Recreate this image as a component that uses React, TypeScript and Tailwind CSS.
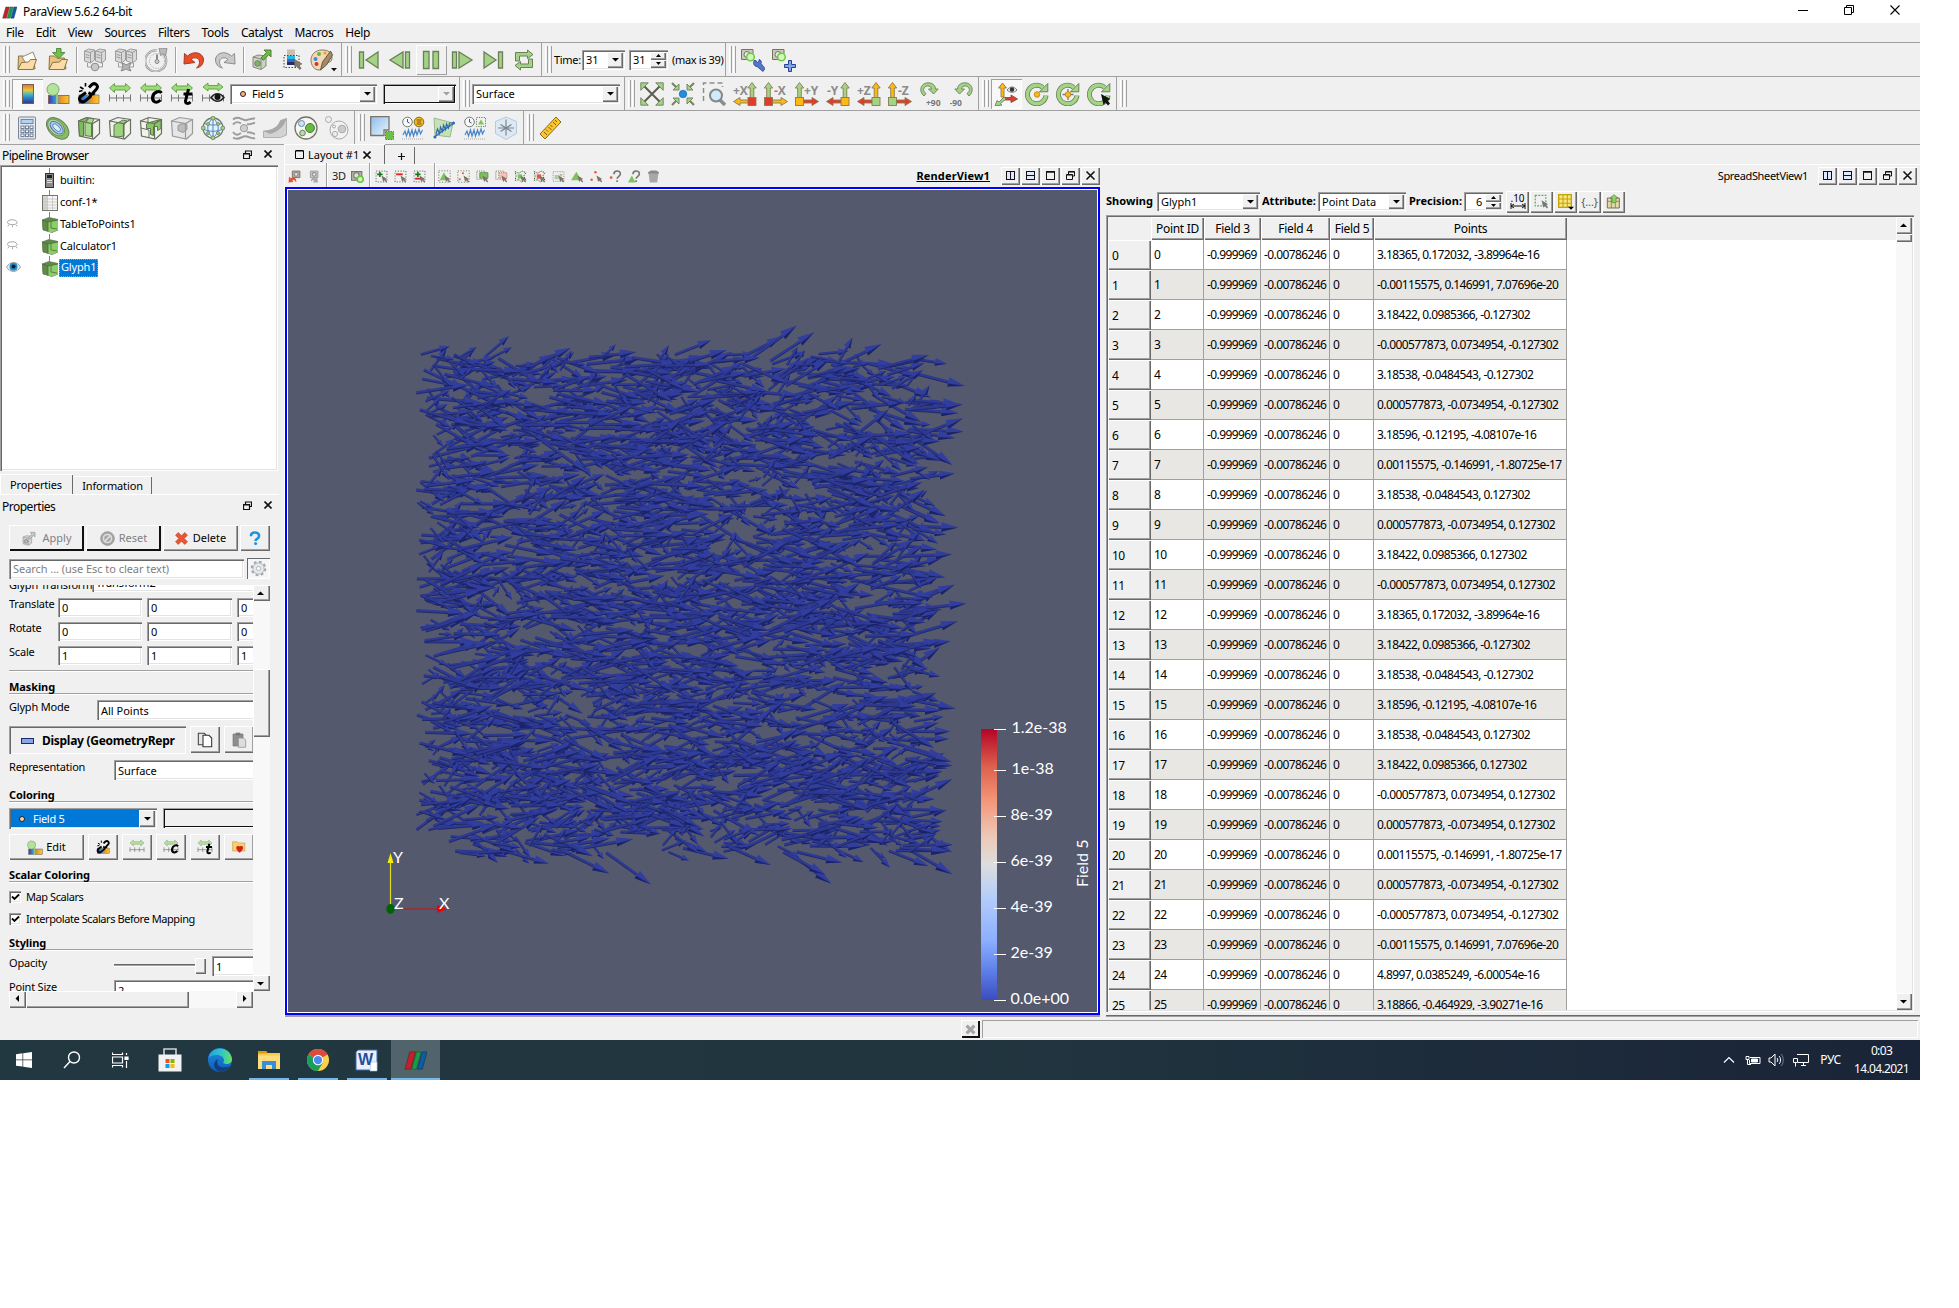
import React from "react";

const SUNK = "bg-white shadow-[inset_1px_1px_0_#a0a0a0,inset_2px_2px_0_#696969,inset_-1px_-1px_0_#fff,inset_-2px_-2px_0_#e3e3e3]";
const SUNK_OFF = "bg-[#f0f0f0] shadow-[inset_1px_1px_0_#a0a0a0,inset_2px_2px_0_#101010,inset_-1px_-1px_0_#fff,inset_-2px_-2px_0_#101010]";
const RAISED = "bg-[#f0f0f0] shadow-[inset_1px_1px_0_#fff,inset_-1px_-1px_0_#696969,inset_-2px_-2px_0_#a0a0a0]";
const RAISED_OFF = "bg-[#f0f0f0] shadow-[inset_1px_1px_0_#fff,inset_-2px_-2px_0_#101010]";
const TRACK = "bg-[#f8f8f8]";

type Kids = { children?: React.ReactNode };

/* ---------- icons ---------- */
const G = "#a3d486";
const GS = "#6c7f58";
const OL = "#75755f";

function I({ children, s = 24 }: Kids & { s?: number }) {
  return (
    <svg width={s} height={s} viewBox="0 0 24 24" fill="none" className="shrink-0">
      {children}
    </svg>
  );
}

const Logo = ({ s = 16 }: { s?: number }) => (
  <I s={s}>
    <path d="M6 3h6L7 21H1z" fill="#c4202b" stroke="#5a2020" strokeWidth=".6" />
    <path d="M13 3h5l-5 18H8z" fill="#1c9a4b" stroke="#204a2a" strokeWidth=".6" />
    <path d="M19 3h5l-5 18h-5z" fill="#0c5ca8" stroke="#10304a" strokeWidth=".6" />
  </I>
);

const Folder = ({ arrow }: { arrow?: boolean }) => (
  <I>
    <path d="M3 21L3.500 8h5l2 2h8l1.500 11z" fill="#eec27a" stroke="#8a7448" />
    {!arrow && <path d="M7 9l11-5 3 8-9 5z" fill="#fdfdf6" stroke="#8d8d80" />}
    <path d="M3 21.500l3.500-7 7-.5 2-2.500h6L18 21.500z" fill="#fbdca6" stroke="#8a7448" />
    {arrow && <path d="M10.500.500h4.500v4h4l-6.200 6L6.500 4.500h4z" fill="#6fc24b" stroke="#457a30" strokeWidth=".8" />}
  </I>
);

const Server = ({ kind }: { kind: number }) => (
  <I>
    <g fill="#d9d9d9" stroke="#949494" strokeWidth=".9">
      <path d="M1.500 3l4-2 6 1v10l-4 3-6-2z" />
      <path d="M1.500 3l6 1.500 4-2.500M7.500 4.500V15M2.500 6.500l4 1M2.500 9l4 1" />
      <path d="M12.500 3l4-2 6 1v10l-4 3-6-2z" />
      <path d="M12.500 3l6 1.500 4-2.500M18.500 4.500V15M13.500 6.500l4 1M13.500 9l4 1" />
      <path d="M4.500 15v4h15v-4" fill="none" />
    </g>
    {kind === 0 ? (
      <circle cx="12" cy="19" r="3.800" fill="#c9c9c9" stroke="#8c8c8c" />
    ) : (
      <path d="M8 15l3 1 1 1 2-1 3-1-2 4 2 4-3-1-2-1-2 1-3 1 2-4z" fill="#b4b4b4" stroke="#8c8c8c" />
    )}
  </I>
);

const Timer = () => (
  <I>
    <path d="M17 4.500A10.500 10.500 0 1 1 12 2.500" stroke="#999" strokeWidth="2.200" />
    <path d="M17 4.500A10.500 10.500 0 1 1 12 2.500" stroke="#e4e4e4" strokeWidth=".8" />
    <circle cx="12" cy="13" r="7.500" stroke="#aaa" strokeDasharray="1.200 1.200" />
    <path d="M12 6.500v6.500" stroke="#888" strokeWidth="2" />
    <circle cx="12" cy="13.500" r="2" fill="#ccc" stroke="#888" />
    <path d="M14 0l8 .5-1.500 7.500-2-2.500-3 2z" fill="#bbb" stroke="#888" strokeWidth=".8" />
  </I>
);

const Undo = ({ redo }: { redo?: boolean }) => (
  <I>
    <g transform={redo ? "translate(24 0) scale(-1 1)" : undefined}>
      <path
        d="M2 16L2.500 5.500l3 2.500c7-6 15-3 16 3 0 6-3 8-7 9 4-3 4-9 0-10-2-.5-4 0-5.500 1.500l4 3z"
        fill={redo ? "#c8c8c8" : "#ee4b25"}
        stroke={redo ? "#8d8d8d" : "#97402c"}
      />
    </g>
  </I>
);

const CubeArrow = ({ off, s = 24 }: { off?: boolean; s?: number }) => (
  <I s={s}>
    <path d="M3 9l5-2 8 1v10l-5 3.500-8-2.500z" fill={off ? "#d4d4d4" : "#c9d4c0"} stroke={off ? "#999" : "#858a7a"} />
    <path d="M3 9l8 2 5-3M11 11v10" stroke={off ? "#999" : "#858a7a"} />
    <circle cx="7.500" cy="15.500" r="2.800" fill={off ? "#bbb" : "#7db564"} stroke="#777" />
    <path d="M11 10l5.500-5.500-2.500-2.500h7v7l-2.300-2.300-5.200 5.500z" fill={off ? "#c5c5c5" : "#6dba45"} stroke={off ? "#999" : "#4e7a3a"} />
  </I>
);

const Rainbow = ({ id }: { id: string }) => (
  <linearGradient id={id} x1="0" y1="0" x2="1" y2="0">
    <stop offset="0" stopColor="#5b2d8e" />
    <stop offset=".3" stopColor="#2f8fe0" />
    <stop offset=".65" stopColor="#f39a1f" />
    <stop offset="1" stopColor="#f6c93c" />
  </linearGradient>
);

const ColorBarSel = () => (
  <I>
    <rect x="6" y="1.500" width="8" height="6.500" fill="#c8bfae" />
    <rect x="6" y="8" width="8" height="3" fill="#29b6e8" />
    <rect x="6" y="11" width="8" height="3" fill="#2570c8" />
    <rect x="6" y="14" width="8" height="3" fill="#2b2a6e" />
    <rect x="3" y="7.500" width="15" height="12" stroke="#445" strokeDasharray="1.500 1.500" />
    <path d="M13 11l1 8.500 2-1.500 2.500 3.500 1.700-1-2.200-3.500 3-1z" fill="#8a7a66" stroke="#555" strokeWidth=".5" />
  </I>
);

const Palette = () => (
  <svg width="28" height="24" viewBox="0 0 28 24" fill="none" className="shrink-0">
    <path d="M12 2C5 2 1 7 1 12s3 10 8 10c4 0 2-4 4-6s9 0 9-6-4-8-10-8z" fill="#f3d9b8" stroke="#8a7a62" />
    <circle cx="9" cy="6" r="2" fill="#62b83a" />
    <circle cx="15" cy="5" r="1.600" fill="#e8a020" />
    <circle cx="5.500" cy="11" r="2" fill="#3a8de0" />
    <circle cx="6.500" cy="16" r="2" fill="#d8302a" />
    <path d="M20.500 3l-8 11-2 8 6-5 6-10z" fill="#a08b6a" stroke="#6b5a40" />
    <path d="M21 20h6l-3 3.200z" fill="#111" />
  </svg>
);

const Vcr = ({ k }: { k: number }) => (
  <I>
    <g fill={G} stroke={GS} strokeWidth="1.300">
      {k === 0 && <path d="M2.500 4h4v16h-4zM21 4v16L9 12z" />}
      {k === 1 && <path d="M17.500 4h4v16h-4zM15 4v16L2 12z" />}
      {k === 2 && <path d="M4.500 3.500h5.500v17H4.500zM14 3.500h5.500v17H14z" />}
      {k === 3 && <path d="M2.500 4h4v16h-4zM9 4v16l13-8z" />}
      {k === 4 && <path d="M17.500 4h4v16h-4zM3 4v16l12-8z" />}
      {k === 5 && (
        <path strokeWidth="1" d="M3.500 13V4.500h12V2l5.500 4.500-5.500 4V8h-8v5zM20.500 11v8.500h-12V22L3 17.500l5.500-4V16h8v-5z" />
      )}
    </g>
  </I>
);

const Camera = ({ plus }: { plus?: boolean }) => (
  <I>
    <path d="M.5 1.500H12v10H.5z" fill="#c9c9bd" stroke={OL} />
    <circle cx="6" cy="6.500" r="3" fill="#e8e8e0" stroke={OL} />
    <circle cx="9.500" cy="9" r="3.800" fill="#d6f5c4" stroke="#69cf3c" strokeWidth="1.500" />
    {plus ? (
      <path d="M16.500 14h3v4h4v3h-4v4h-3v-4h-4v-3h4z" fill="#7fa8ea" stroke="#27408f" transform="translate(0 -1.500)" />
    ) : (
      <path d="M13 12.500l2 0 1 2 2-1 0-2c2 0 3 3 2 4l4 5-2 3-6-5c-3 0-4-3-3-6z" fill="#5577c9" stroke="#27408f" strokeWidth=".8" />
    )}
  </I>
);

const ColorMapBar = () => (
  <svg width="12" height="20" viewBox="0 0 12 20" className="ml-px">
    <defs>
      <linearGradient id="cmb" x1="0" y1="0" x2="0" y2="1">
        <stop offset="0" stopColor="#e5732a" />
        <stop offset=".3" stopColor="#e6c743" />
        <stop offset=".55" stopColor="#39b2c6" />
        <stop offset=".8" stopColor="#2b63bd" />
        <stop offset="1" stopColor="#3d3580" />
      </linearGradient>
    </defs>
    <rect x=".5" y=".5" width="11" height="19" fill="url(#cmb)" stroke="#75604c" />
  </svg>
);

const EditMap = ({ s = 24 }: { s?: number }) => (
  <I s={s}>
    <defs><Rainbow id="rb1" /></defs>
    <rect x="2.500" y="13.500" width="20.500" height="8" fill="url(#rb1)" stroke="#6b6155" strokeWidth=".8" />
    <path d="M11 8v14" stroke="#9cc27e" strokeWidth="2" />
    <circle cx="7" cy="7.500" r="6" fill="#b4e39c" stroke="#7fa86a" />
  </I>
);

const ChainMap = ({ s = 24 }: { s?: number }) => (
  <I s={s}>
    <defs><Rainbow id="rb2" /></defs>
    <rect x="2" y="13" width="20" height="8.500" fill="url(#rb2)" stroke="#6b6155" strokeWidth=".6" />
    <g stroke="#000" strokeWidth="3">
      <path d="M12 5.500l3-3c3.500-2.500 7 1.500 4.500 4.500l-4 4.500M9 10.500l-5.500 4c-3 3 1 7 4.500 4.500l5-4c1.500-2 .5-3.500-1.500-4.500M12.500 11.500c1.500 1 3.500 1 5-.5" />
      <path d="M3 5l3.500 2M8.500 1v3.500M2 9.500l3.500-1" strokeWidth="1.600" />
    </g>
  </I>
);

const Range = ({ k, s = 24, off }: { k: number; s?: number; off?: boolean }) => (
  <I s={s}>
    <path
      d={k === 3 ? "M2 5l5-4v2.500h10V1l5 4-5 4V7H7v2z" : "M1.500 6l5-4.500V4h11V1.500L22.500 6l-5 4.500V8h-11v2.500z"}
      fill={off ? "#b4e09f" : "#9bdc74"}
      stroke={off ? "#90ad84" : "#5d9b43"}
      strokeWidth=".9"
    />
    <path d="M1 16h22M1.500 12.500v7M8.500 12.500v7M15.500 12.500v7M22.500 12.500v7" stroke="#777" />
    {k === 1 && <path d="M22.500 11c-2-3-8-1-9 4-.6 5 4 7 8 3" stroke="#000" strokeWidth="3" />}
    {k === 2 && <path d="M18.500 7l-3 12c0 3 3 3 5 1M13.500 12h9" stroke="#000" strokeWidth="3" />}
    {k === 3 && (
      <>
        <path d="M10 15.500c4-5 9-5 13 0-4 5-9 5-13 0z" fill="#ddd" stroke="#222" strokeWidth="1.500" />
        <circle cx="16.500" cy="15" r="3" fill="#111" />
      </>
    )}
  </I>
);

const ResetCam = () => (
  <I>
    <path d="M3 3l18 18M21 3L3 21" stroke="#5b5f4d" strokeWidth="2" />
    <path d="M.8.800h7.500l-7.500 7.500zM23.200.800h-7.500l7.500 7.500zM.8 23.200h7.500l-7.500-7.500zM23.200 23.200h-7.500l7.500-7.500z" fill={G} stroke={GS} strokeWidth=".9" />
  </I>
);
const ZoomData = () => (
  <I>
    <path d="M1 1l6 6M23 1l-6 6M1 23l6-6M23 23l-6-6" stroke="#77856a" strokeWidth="2.200" />
    <path d="M8 8H2l6-6zM16 8h6l-6-6zM8 16H2l6 6zM16 16h6l-6 6z" fill={G} stroke={GS} strokeWidth=".9" />
    <circle cx="12" cy="12" r="3.800" fill="#1f8fe0" stroke="#1b5f9a" strokeWidth=".6" />
  </I>
);
const ZoomBox = () => (
  <I>
    <path d="M1.500 19V1h19v4" stroke="#8d8d8d" strokeWidth="1.500" strokeDasharray="5 3" />
    <path d="M18 18l5 5" stroke="#8d8d8d" strokeWidth="3.500" />
    <circle cx="14" cy="13.500" r="6" fill="#cfeaf9" stroke="#83868a" strokeWidth="2" />
  </I>
);

const AXES: { t: string; lx: number; bx: number; up: string; side: string; box: string; dir: number }[] = [
  { t: "+X", lx: 0, bx: 19, up: G, side: "#fdb913", box: "#e33b2b", dir: -1 },
  { t: "-X", lx: 10, bx: 4.5, up: G, side: "#fdb913", box: "#e33b2b", dir: 1 },
  { t: "+Y", lx: 9, bx: 4.5, up: G, side: "#e33b2b", box: "#fdb913", dir: 1 },
  { t: "-Y", lx: 1, bx: 19, up: G, side: "#e33b2b", box: "#fdb913", dir: -1 },
  { t: "+Z", lx: 0, bx: 19, up: "#fdb913", side: "#e33b2b", box: G, dir: -1 },
  { t: "-Z", lx: 10, bx: 4.5, up: "#fdb913", side: "#e33b2b", box: G, dir: 1 },
];
const Axis = ({ a }: { a: (typeof AXES)[0] }) => (
  <I>
    <text x={a.lx} y="12.500" fontSize="12" fontFamily="Open Sans, sans-serif" fontWeight="700" fill="#8b8b8b">
      {a.t}
    </text>
    <g stroke="#8a7a50" strokeWidth=".9">
      <path d={`M${a.bx - 1.8} 17V6h-2.400L${a.bx} .5l4.200 5.500h-2.400v11z`} fill={a.up} />
      {a.dir < 0 ? (
        <path d="M16 18H7V15.500L.5 19.500 7 23.500V21h9z" fill={a.side} />
      ) : (
        <path d="M8 18h9v-2.500l6.500 4-6.500 4V21H8z" fill={a.side} />
      )}
      <rect x={a.bx - 4} y="15.500" width="8" height="8" fill={a.box} />
    </g>
  </I>
);

const Rot = ({ neg }: { neg?: boolean }) => (
  <I>
    <g transform={neg ? "translate(24 0) scale(-1 1)" : undefined}>
      <path d="M5 14C-1 9 2 .8 9 .8c5 0 7.500 3 7.500 6.200h2.700l-4.700 5-5-5h3c0-3-4.500-4-6.500-2s-2 4.500 1 6.500z" fill={G} stroke={GS} strokeWidth=".9" />
    </g>
    <text x={neg ? -0.5 : 7} y="23.500" fontSize="8.500" fontFamily="Open Sans, sans-serif" fontWeight="700" fill="#777">
      {neg ? "-90" : "+90"}
    </text>
  </I>
);

const AxesEye = () => (
  <I>
    <path d="M7 15V6H4.500L8.500 1l4 5H10v9z" fill="#fdb913" stroke="#8a7a50" strokeWidth=".9" />
    <path d="M11 15.500h6V13l6.500 4-6.500 3.500V18h-6z" fill="#e33b2b" stroke="#8a4a40" strokeWidth=".9" />
    <path d="M10 15l-5 5-2-1.500L1 24l7-1-1.500-1.500L12 17z" fill={G} stroke={GS} strokeWidth=".9" />
    <path d="M13 8c3-4 7-4 10 0-3 3-7 3-10 0z" fill="#eee" stroke="#777" />
    <circle cx="18" cy="7.500" r="2.200" fill="#333" />
  </I>
);
const Center = ({ k }: { k: number }) => (
  <I>
    <path d="M17.500 5.200A9.300 9.300 0 1 0 21 13.500" stroke={GS} strokeWidth="5" />
    <path d="M22.800 1.500v8.300h-8.300z" fill={G} stroke={GS} />
    <path d="M18 5.600A9.300 9.300 0 1 0 21 13" stroke={G} strokeWidth="3.400" />
    {k === 1 && <path d="M12 7v11M6.500 12.500h11" stroke="#777" strokeWidth="1.300" />}
    {k < 2 && <circle cx="12" cy="12.500" r="2.800" fill="#fdb913" stroke="#a07a20" strokeWidth=".7" />}
    {k === 2 && <path d="M14 12l2.500 11 2-2.500 2.500 3 2-2-2.500-3 2.800-1.500z" fill="#111" />}
  </I>
);

/* filters toolbar */
const Calc = () => (
  <I>
    <rect x="3.500" y="1" width="17" height="22" rx="1" fill="#dfe8f3" stroke="#7b8796" />
    <rect x="6" y="3.500" width="12" height="4" fill="#b7d0ee" stroke="#7b8796" />
    <g fill="#fff" stroke="#66758a" strokeWidth=".9">
      {[10, 14, 18].map((y) => [6, 10.5, 15].map((x) => <rect key={`${x}-${y}`} x={x} y={y} width="3" height="2.600" />))}
    </g>
  </I>
);
const Contour = () => (
  <I>
    <ellipse cx="12" cy="12.500" rx="13" ry="8.500" transform="rotate(42 12 12)" fill="#7fc25e" stroke={GS} />
    <ellipse cx="9.800" cy="11.500" rx="10" ry="6.500" transform="rotate(44 10 12)" fill="#b9dba6" stroke={GS} strokeWidth=".8" />
    <ellipse cx="10.500" cy="12" rx="8" ry="4.500" transform="rotate(44 11 12)" fill="#a9cdee" stroke="#4f7aa5" />
    <ellipse cx="10.500" cy="12" rx="5" ry="2.300" transform="rotate(44 11 12)" fill="#dcebf8" stroke="#4f7aa5" strokeWidth=".8" />
  </I>
);
const Box3 = ({ k }: { k: number }) => {
  const st = k === 3 ? "#9a9a9a" : "#66705c";
  return (
    <I>
      <path d="M1.500 5l8-3.500 13 2v14l-6 5.500-14-3z" fill={k === 3 ? "#e6e6e6" : "#f0f3ec"} stroke={st} strokeWidth="1.200" />
      {k === 0 && <path d="M1.500 5l7-3 3 .5-5 4v14l-4-.7z" fill="#7dbb5c" stroke={st} />}
      {k === 0 && <path d="M8 7.500l4-5.500 5 1-2.500 5v12.500l-6.500-1z" fill="#a5dc85" stroke={st} />}
      {k === 1 && <path d="M6 9l9-5 4 1-3 4v11l-7 1-3-1z" fill="#9bd47c" stroke={st} />}
      {k === 2 && <path d="M12 6l10-2.500v9l-3.500 2v-4h-4v9l-3-1v-6h-4V8z" fill="#86c95f" stroke={st} />}
      {k === 3 && <path d="M8 9.500l4-2 5 1v5l-4 3-5-2z" fill="#bcbcbc" stroke={st} />}
      <path d="M1.500 5l14 2.500 7-4M15.500 7.500V22.500" stroke={st} strokeWidth="1.200" />
      {k === 2 && <path d="M2 12l8 2v7.500M9 2v5" stroke={st} />}
    </I>
  );
};
const Globe = () => (
  <I>
    <circle cx="12" cy="12" r="10" fill="#e5f0fb" stroke="#6f7f6b" strokeWidth="1.300" />
    <path d="M12 2c-7 6-7 14 0 20M12 2c7 6 7 14 0 20M12 2v20M3 7.500c6 2 12 2 18 0M2 13c6 3 14 3 20 0" stroke="#4f87c2" />
    <g fill={G} stroke={GS} strokeWidth=".8">
      <circle cx="12" cy="2.200" r="2" /><circle cx="12" cy="21.800" r="2" />
      <circle cx="2.200" cy="12" r="2" /><circle cx="21.800" cy="12" r="2" />
      <circle cx="7" cy="8" r="1.500" /><circle cx="17" cy="8" r="1.500" />
      <circle cx="7" cy="17" r="1.500" /><circle cx="17" cy="17" r="1.500" />
    </g>
  </I>
);
const Stream = () => (
  <I>
    <path d="M1 3.500c6-5 9 2 14 .5s6-2 8-1.500M1 8.500c3-3.500 5-3 8-1M15 8c4 1.500 5-1.500 8-1M1 16c3 4 5 3 8 1M15 16.500c4-1.500 5 2 8 1M1 21.500c6 4 9-2.500 14-1s6 2.500 8 1.500" stroke="#9c9c9c" strokeWidth="2" />
    <circle cx="12" cy="12.200" r="3.600" fill="#cfcfcf" stroke="#9a9a9a" />
  </I>
);
const Warp = () => (
  <I>
    <path d="M.5 15h6c5 0 9-4 11-10.500l6-2V19l-6 2.500H.5z" fill="#d2d2d2" stroke="#b0b0b0" />
    <path d="M.5 15c9-1 14-4 17-10.500l6-2C21 11 15 15.500 7 18z" fill="#a8a8a8" />
  </I>
);
const Group = ({ off }: { off?: boolean }) => (
  <I>
    {off ? (
      <>
        <circle cx="14" cy="14" r="9" fill="#f2f2f2" stroke="#aaa" />
        <circle cx="3.500" cy="3.500" r="3" fill="#eee" stroke="#aaa" />
        <circle cx="17" cy="13" r="3.800" fill="#ccc" stroke="#aaa" />
        <circle cx="10" cy="18" r="2.600" fill="#eee" stroke="#aaa" />
        <circle cx="9" cy="10.500" r="1.500" fill="#eee" stroke="#aaa" />
      </>
    ) : (
      <>
        <circle cx="12" cy="12" r="11" fill="#f6f6f2" stroke="#77756a" strokeWidth="1.300" />
        <circle cx="7.500" cy="7.500" r="3" fill="#cde4f8" stroke="#6b87a5" />
        <circle cx="16" cy="12" r="4.500" fill="#63bb3f" stroke="#4d7a3b" />
        <circle cx="8.500" cy="17" r="2.800" fill="#b8dca5" stroke="#6b7f5f" />
      </>
    )}
  </I>
);
const Extract = () => (
  <I>
    <defs>
      <linearGradient id="exg" x1="0" y1="0" x2="1" y2="1">
        <stop offset="0" stopColor="#8fbdea" />
        <stop offset="1" stopColor="#eaf5fd" />
      </linearGradient>
    </defs>
    <path d="M.7.700h18.300v13.300h-5v5.500H.7z" fill="url(#exg)" stroke="#77756a" strokeWidth="1.300" />
    <rect x="15.500" y="15.500" width="8" height="8" fill="#6cc04a" stroke="#4c8a34" strokeDasharray="1.500 1" />
  </I>
);
const PlotTime = ({ sel }: { sel?: boolean }) => (
  <I>
    <path d="M2 19l2-4 1.500 5 2-6 1.500 6 2-6 1.500 6 2-6 1.500 5 2-6 1.500 5 2-4" stroke="#4a86c6" strokeWidth="1.200" />
    <circle cx="6.500" cy="6" r="4.800" fill="#f4f8ff" stroke="#77756a" />
    <path d="M6.500 3v3l2 1" stroke="#555" />
    {sel ? (
      <>
        <rect x="13.500" y="1.500" width="9" height="9" stroke="#6b7f5f" strokeDasharray="1.200 1.200" />
        <path d="M18 3.500l3 5h-6z" fill="#7fc45e" />
      </>
    ) : (
      <>
        <circle cx="18" cy="6" r="4.800" fill="#f5b921" stroke="#8a6d20" />
        <path d="M15.500 4h5M15.500 8h5M16 6h4" stroke="#7a5d10" />
      </>
    )}
    <path d="M1 23h22" stroke="#aaa" strokeDasharray="1 1" />
  </I>
);
const PlotLine = () => (
  <I>
    <path d="M2 2l19 5-3 14-15-2z" fill="#c4e2b6" stroke="#9db98f" />
    <path d="M4 18l1.500-5 2 4.500 1-6.500 2 4.500 1-6.500 2 4.500 1-5.500 2 4 1-5 3 0" stroke="#2d68b0" strokeWidth="1.200" />
    <path d="M2 21L22 7" stroke="#2d68b0" strokeWidth="1.500" />
    <circle cx="3" cy="21" r="1.500" fill="#2d68b0" /><circle cx="21.500" cy="7" r="1.500" fill="#2d68b0" />
  </I>
);
const Probe = () => (
  <I>
    <path d="M1.500 5.500L12 1l10.500 4.500v12L12 23.500 1.500 17.500z" fill="#dce8f3" stroke="#b5cbdc" />
    <path d="M12 3.500v16M4 12h16M6.500 8.500l11 7M17.500 8.500l-11 7" stroke="#7c868e" strokeWidth="1.200" />
  </I>
);
const Ruler = () => (
  <I>
    <path d="M17 1l5 5L6 23l-5-5z" fill="#fbc52d" stroke="#8a6d20" />
    <path d="M16 4l2 2M14 6l3 3M11.500 9l2 2M9.500 11l3 3M7 13.500l2 2M5 16l3 3" stroke="#7a5d10" />
  </I>
);

/* small icons of the view toolbar */
const Cursor = () => <path d="M12 10l3 12 2.500-3 3 4 2-2-3-3.500 3-1z" fill="#7d7263" />;
const VIcon = ({ k }: { k: number }) => (
  <I s={13}>
    {k < 2 && (
      <>
        <path d="M8 2h14v12H8z" fill={k ? "#c4c4c4" : "#b5ad9f"} stroke={k ? "#999" : "#75695a"} strokeWidth="1.600" />
        <circle cx="15" cy="8" r="3.500" fill="#ddd" stroke="#777" strokeWidth="1.500" />
        <path d={k ? "M22 23l-1-10-3 2.500c-6-3-10 1-9 6.500 3-4 6-3 6-2l-2 3z" : "M1 23l1-11 3 3c7-4 12 2 10 8-3-6-6-5-7-4l2 3z"} fill={k ? "#a8a8a8" : "#e1543a"} />
      </>
    )}
    {k === 2 && (
      <>
        <path d="M1 3h19v16H1z" fill="#b4b9a6" stroke="#75756a" strokeWidth="2" />
        <circle cx="10" cy="10" r="5" fill="#e1e1da" stroke="#777" strokeWidth="2" />
        <circle cx="17" cy="17" r="5.500" fill="#d5f3c4" stroke="#67c53f" strokeWidth="3" />
      </>
    )}
    {k >= 3 && k <= 5 && (
      <>
        <rect x="2" y="2" width="20" height="20" stroke="#7b7b7b" strokeWidth="2.200" strokeDasharray="2 3" />
        {k !== 4 && <path d="M9 3v10M4 8h10" stroke="#14781a" strokeWidth="3" />}
        {k === 4 && <path d="M4 8h12" stroke="#e02418" strokeWidth="3.500" />}
        {k === 5 && <path d="M4 16h12" stroke="#e02418" strokeWidth="3.500" />}
        <Cursor />
      </>
    )}
    {(k === 6 || k === 7) && (
      <>
        <rect x="1.500" y="1.500" width="21" height="21" stroke="#6f6f55" strokeWidth="1.600" strokeDasharray="2 3" />
        {k === 6 ? <path d="M11 4l8 15H3z" fill="#7dc25c" /> : <g fill="#f0553c"><circle cx="11" cy="6" r="2" /><circle cx="5" cy="17" r="2" /><circle cx="17" cy="17" r="2" /></g>}
        <Cursor />
      </>
    )}
    {(k === 8 || k === 9) && (
      <>
        <rect x="1.500" y="2" width="15" height="15" stroke="#7b7b60" strokeWidth="1.800" strokeDasharray="2 2" />
        <path d="M7 5h15v10H7z" fill={k === 8 ? "#7dc25c" : "#f3c4b8"} stroke={k === 8 ? "#5a8c48" : "#e05540"} strokeWidth="1.600" strokeDasharray={k === 9 ? "2 2" : undefined} />
        <Cursor />
      </>
    )}
    {(k === 10 || k === 11) && (
      <>
        <path d="M2 3l7 3 6-4 7 3-4 6 4 8-8 3-5-4-7 1 2-8z" stroke="#2f5f2c" strokeWidth="1.800" strokeDasharray="2.500 2" />
        <path d="M7 8h8v8H7z" fill={k === 10 ? "#7dc25c" : "#f0553c"} />
        <Cursor />
      </>
    )}
    {k === 12 && (
      <>
        <rect x="2" y="3" width="20" height="18" stroke="#9a9a8a" strokeWidth="1.800" strokeDasharray="2 2" />
        <path d="M5 9h8v8H5zM14 7h5v5h-5z" fill="#b4c6ac" />
        <Cursor />
      </>
    )}
    {(k === 13 || k === 14) && (
      <>
        {k === 13 ? <path d="M10 3l9 16H0z" fill="#7dc25c" /> : <g fill="#f0553c"><circle cx="10" cy="4" r="2.300" /><circle cx="3" cy="18" r="2.300" /><circle cx="18" cy="18" r="2.300" /></g>}
        <Cursor />
      </>
    )}
    {(k === 15 || k === 16) && (
      <>
        {k === 15 ? <circle cx="4" cy="14" r="2.500" fill="#f0553c" /> : <path d="M7 10l7 13H0z" fill="#7dc25c" />}
        <path d="M9 8c0-8 12-8 12-1 0 5-6 5-6 9M15 19v3" stroke="#77776d" strokeWidth="3" />
      </>
    )}
    {k === 17 && (
      <>
        <path d="M3 6h18l-2 17H5z" fill="#a8a8a8" />
        <path d="M2 4l5-3h10l5 3v3H2z" fill="#8b8b8b" />
      </>
    )}
  </I>
);

const Tri = ({ d = "d", off }: { d?: "u" | "d" | "l" | "r"; off?: boolean }) => (
  <svg width="7" height="7" viewBox="0 0 7 7" className="shrink-0">
    <path
      d={{ d: "M0 2h7L3.500 5.500z", u: "M0 5h7L3.500 1.500z", l: "M5 0v7L1.500 3.500z", r: "M2 0v7l3.500-3.500z" }[d]}
      fill={off ? "#a0a0a0" : "#000"}
    />
  </svg>
);

/* ---------- widgets ---------- */
const Btn = ({ children, cls, off }: Kids & { cls: string; off?: boolean }) => (
  <div className={`flex shrink-0 items-center justify-center ${off ? RAISED_OFF : RAISED} ${cls}`}>{children}</div>
);

const Combo = ({ children, cls, off }: Kids & { cls: string; off?: boolean }) => (
  <div className={`flex shrink-0 items-center p-[2px] ${off ? SUNK_OFF : SUNK} ${cls}`}>
    <div className="flex min-w-0 flex-1 items-center pt-px pl-[2px]">{children}</div>
    <Btn cls="h-full w-4 pl-px"><Tri off={off} /></Btn>
  </div>
);

const Spin = ({ children, cls }: Kids & { cls: string }) => (
  <div className={`flex shrink-0 items-center p-[2px] ${SUNK} ${cls}`}>
    <div className="flex-1 pt-px">{children}</div>
    <div className="flex h-full flex-col">
      <Btn cls="h-1/2 w-4"><svg width="5" height="3" viewBox="0 0 5 3"><path d="M0 3h5L2.500 0z" /></svg></Btn>
      <Btn cls="h-1/2 w-4"><svg width="5" height="3" viewBox="0 0 5 3"><path d="M0 0h5L2.500 3z" /></svg></Btn>
    </div>
  </div>
);

const Field = ({ children, cls }: Kids & { cls: string }) => (
  <div className={`flex shrink-0 items-center pt-[2px] pl-1 ${SUNK} ${cls}`}>{children}</div>
);

const Grip = () => (
  <div className="flex h-[27px] w-3 shrink-0 gap-[1px] pl-[3px]">
    <div className="w-[3px] border-r border-l border-r-[#a0a0a0] border-l-white" />
    <div className="w-[3px] border-r border-l border-r-[#a0a0a0] border-l-white" />
  </div>
);
const Section = ({ children, cls }: Kids & { cls: string }) => (
  <div className={`flex h-full shrink-0 items-center border-r border-[#a0a0a0] ${cls}`}>
    <Grip />
    {children}
  </div>
);
const Cell = ({ children, box }: Kids & { box?: "in" | "out" }) => (
  <div
    className={`flex h-[30px] w-[31px] shrink-0 items-center justify-center pr-px ${
      box === "in"
        ? "bg-[#f8f8f8] shadow-[inset_1px_1px_0_#a0a0a0,inset_-1px_-1px_0_#fff]"
        : box === "out"
          ? "shadow-[inset_1px_1px_0_#fff,inset_-1px_-1px_0_#a0a0a0]"
          : ""
    }`}
  >
    {children}
  </div>
);
const Sep = ({ cls }: { cls: string }) => (
  <div className={`flex h-[26px] shrink-0 justify-center ${cls}`}>
    <div className="w-[2px] border-r border-l border-r-white border-l-[#a0a0a0]" />
  </div>
);

const Dock = () => (
  <svg width="9" height="9" viewBox="0 0 9 9" fill="none" stroke="#111">
    <path d="M2.500 3V1h6v4.500H6.500M2.500 1h6M.5 3.500h6v5h-6zM.5 4h6" strokeWidth="1.200" />
  </svg>
);
const Cross = ({ s = 8 }: { s?: number }) => (
  <svg width={s} height={s} viewBox="0 0 8 8" stroke="#111" strokeWidth="1.600"><path d="M.5.500l7 7M7.500.500l-7 7" /></svg>
);

const DockTitle = ({ children, cls }: Kids & { cls: string }) => (
  <div className={`flex items-center pr-[6px] pl-[2px] ${cls}`}>
    <span className="flex-1 text-[12px] tracking-[-0.5px]">{children}</span>
    <div className="flex gap-[12px] pb-1"><Dock /><Cross /></div>
  </div>
);

const ViewButtons = () => (
  <div className="flex gap-[1px]">
    {[0, 1, 2, 3, 4].map((i) => (
      <Btn key={i} cls="h-[18px] w-[19px]">
        <svg width="11" height="11" viewBox="0 0 11 11" fill="none" stroke="#111" className="mr-px mb-px">
          {i < 3 && <rect x="1.500" y="1.500" width="8" height="8" fill={i < 2 ? "#dfe8ff" : "none"} />}
          {i === 0 && <path d="M5.500 1.500V10" />}
          {i === 1 && <path d="M1 5.500h9" />}
          {i === 2 && <path d="M1 2h9" strokeWidth="1.500" />}
          {i === 3 && <path d="M3.500 4V1.500h6V6h-2M1.500 4.500h6v5h-6zM3.500 2h6M1.500 5h6" />}
          {i === 4 && <path d="M1.500 1.500l8 8M9.500 1.500l-8 8" strokeWidth="1.600" />}
        </svg>
      </Btn>
    ))}
  </div>
);

/* ---------- pipeline ---------- */
const GreenCube = () => (
  <svg width="16" height="16" viewBox="0 0 16 16" fill="none" className="shrink-0">
    <path d="M0 3l7-2.500 9 2v10.500L10 15.500 1 13z" fill="#5f8a48" stroke="#57704a" strokeWidth=".7" />
    <path d="M6 5l10-2v10l-6 2.500-4-1z" fill="#8ccf69" />
    <path d="M0 3l6 2 10-2M6 5v9.500M9 4.500V11l6 1" stroke="#4d6b3e" strokeWidth=".8" />
  </svg>
);
const PIPE = [
  { t: "builtin:", icon: 0, eye: 0 },
  { t: "conf-1*", icon: 1, eye: 0 },
  { t: "TableToPoints1", icon: 2, eye: 1 },
  { t: "Calculator1", icon: 2, eye: 1 },
  { t: "Glyph1", icon: 2, eye: 2 },
];

const Pipeline = () => (
  <div className={`h-[306px] w-[278px] pt-[3px] pl-[2px] ${SUNK}`}>
    {PIPE.map((p) => (
      <div key={p.t} className="flex h-[22px] items-center">
        <div className="flex w-[39px] pl-1">
          {p.eye === 1 && (
            <svg width="13" height="10" viewBox="0 0 14 10" fill="none" stroke="#9a9a9a"><path d="M1.500 4.500c0-4 10-4 10.500 0 0 3-10 3-10.500 0M3 7l-1 1.500M7 7.500v2M11 7l1 1.500" /></svg>
          )}
          {p.eye === 2 && (
            <svg width="15" height="10" viewBox="0 0 15 10"><path d="M.5 5C4-1 11-1 14.500 5 11 11 4 11 .5 5z" fill="#e8eef2" stroke="#8a8a8a" strokeWidth=".8" /><circle cx="7.500" cy="4.800" r="4" fill="#2389c8" /><circle cx="7.500" cy="4.500" r="2" fill="#0a1a28" /></svg>
          )}
        </div>
        <div className="flex h-[22px] w-[17px] flex-col items-center">
          <div className="h-[5px] w-px shrink-0 bg-[#808080]" />
          {p.icon === 0 && (
            <svg width="9" height="15" viewBox="0 0 9 15"><rect x=".5" y=".5" width="8" height="14" fill="#8a8a8a" stroke="#333" /><rect x="2" y="2" width="5" height="3" fill="#222" /><path d="M2 7.500h5M2 9.500h5" stroke="#ddd" /></svg>
          )}
          {p.icon === 1 && (
            <svg width="16" height="16" viewBox="0 0 16 16"><rect x=".5" y=".5" width="15" height="15" fill="#f6f6f6" stroke="#75756a" /><rect x="1" y="1" width="4" height="14" fill="#d4d4d0" /><path d="M1 4h14M1 7h14M1 10h14M1 13h14M5.500 1v14M10.500 1v14" stroke="#c2c2bc" strokeWidth=".8" /></svg>
          )}
          {p.icon === 2 && <GreenCube />}
        </div>
        <span
          className={
            p.eye === 2
              ? "mt-px ml-px flex h-[18px] w-[39px] items-center bg-[#0078d7] pl-[2px] tracking-[-0.15px] text-white outline-1 -outline-offset-1 outline-[#ff8728] outline-dotted"
              : "mt-[2px] ml-[2px] tracking-[-0.15px]"
          }
        >
          {p.t}
        </span>
      </div>
    ))}
  </div>
);

/* ---------- properties ---------- */
const Head = ({ children, cls }: Kids & { cls: string }) => (
  <div className={`flex shrink-0 items-end border-b border-[#a0a0a0] shadow-[0_1px_0_#fff] ${cls}`}>
    <b className="-mb-px leading-[14px] tracking-[-0.1px]">{children}</b>
  </div>
);
const Check = ({ children }: Kids) => (
  <div className="flex h-[22px] items-center gap-[5px]">
    <div className={`flex h-3 w-3 items-center justify-center ${SUNK}`}>
      <svg width="9" height="8" viewBox="0 0 9 8" fill="none" stroke="#000" strokeWidth="1.800"><path d="M1 3.500l2.500 2.500L8 1.500" /></svg>
    </div>
    <span className="pt-px tracking-[-0.42px]">{children}</span>
  </div>
);
const Label = ({ children, cls }: Kids & { cls: string }) => (
  <span className={`shrink-0 tracking-[-0.2px] ${cls}`}>{children}</span>
);

const Properties = () => (
  <div className="flex flex-col pl-[9px]">
    <div className="flex h-[27px] gap-[2px]">
      <Btn off cls="h-[26px] w-[75px] gap-[5px] pt-px text-[#808080]"><CubeArrow off s={16} />Apply</Btn>
      <Btn off cls="h-[26px] w-[75px] gap-1 pt-px text-[#808080]">
        <I s={15}><circle cx="12" cy="12" r="11" fill="#a5a5a5" stroke="#888" /><circle cx="12" cy="12" r="6.500" stroke="#ddd" strokeWidth="2.500" /><path d="M17 7L7 17" stroke="#ddd" strokeWidth="2.500" /></I>
        Reset
      </Btn>
      <Btn cls="h-[26px] w-[75px] gap-[5px] pt-px">
        <I s={13}><path d="M1 6l5-5 6 6 6-6 5 5-6 6 6 6-5 5-6-6-6 6-5-5 6-6z" fill="#f0532f" stroke="#a33a20" /></I>
        Delete
      </Btn>
      <Btn cls="h-[26px] w-[30px]">
        <I s={14}><path d="M5 9c0-9 14-8 14-1 0 6-6 5-6 9" stroke="#1f94dc" strokeWidth="4.500" /><circle cx="13" cy="21.500" r="2.600" fill="#1f94dc" /></I>
      </Btn>
    </div>
    <div className="flex h-[33px] items-center gap-[3px]">
      <Field cls="h-[20px] w-[235px] tracking-[-0.05px] text-[#808080]">Search ... (use Esc to clear text)</Field>
      <div className="flex h-[21px] w-[23px] items-center justify-center bg-[#f6f6f6] shadow-[inset_1px_1px_0_#696969,inset_-1px_-1px_0_#fff]">
        <I s={17}>
          <circle cx="12" cy="12" r="9.500" stroke="#a3a9ae" strokeWidth="3" strokeDasharray="4 3.500" />
          <circle cx="12" cy="12" r="8" fill="#e6e9ec" stroke="#9aa1a8" />
          <circle cx="12" cy="12" r="3" fill="#fafafa" stroke="#9aa1a8" />
        </I>
      </div>
    </div>
    <div className="flex h-[406px]">
      <div className="flex h-[406px] w-[244px] flex-col overflow-hidden whitespace-nowrap">
        <div className="flex h-[7px] shrink-0 items-end overflow-hidden">
          <Label cls="w-[83px] leading-[15px]">Glyph Transform</Label>
          <Field cls="h-[20px] w-[200px]">Transform2</Field>
        </div>
        <div className="h-[6px] shrink-0" />
        {[["Translate", "0"], ["Rotate", "0"], ["Scale", "1"]].map(([l, v]) => (
          <div key={l} className="flex h-6 shrink-0">
            <Label cls="w-[49px] leading-[12px]">{l}</Label>
            <Field cls="h-[19px] w-[84px]">{v}</Field>
            <Field cls="ml-[5px] h-[19px] w-[85px]">{v}</Field>
            <Field cls="ml-[5px] h-[19px] w-[84px]">{v}</Field>
          </div>
        ))}
        <div className="h-px shrink-0 bg-[#a0a0a0] shadow-[0_1px_0_#fff]" />
        <Head cls="h-[23px]">Masking</Head>
        <div className="flex h-[32px] shrink-0 pt-[6px]">
          <Label cls="w-[88px] leading-[14px]">Glyph Mode</Label>
          <Field cls="h-[20px] w-[200px]">All Points</Field>
        </div>
        <div className="flex h-[34px] shrink-0 gap-1">
          <div className="flex h-[28px] w-[177px] shrink-0 items-center bg-[#f0f0f0] pt-px pl-3 shadow-[inset_1px_1px_0_#a0a0a0,inset_2px_2px_0_#696969,inset_-1px_-1px_0_#fff]">
            <div className="h-[6px] w-[13px] border border-[#1b2a6b] bg-[#8aa4e6]" />
            <b className="ml-2 text-[12px] tracking-[-0.28px]">Display (GeometryRepr</b>
          </div>
          <Btn cls="h-[27px] w-[30px]">
            <I s={16}><path d="M2 2h9l4 4v13H2z" fill="#e8e8e0" stroke="#444" strokeWidth="1.600" /><path d="M9 5h9l4 4v13H9z" fill="#fff" stroke="#333" strokeWidth="1.600" /></I>
          </Btn>
          <Btn cls="h-[27px] w-[30px]">
            <I s={16}><path d="M3 3h15v18H3z" fill="#8e8e8e" stroke="#777" /><path d="M7 1h7v4H7z" fill="#777" /><path d="M11 9h8l3 3v11H11z" fill="#ddd" stroke="#888" /></I>
          </Btn>
        </div>
        <div className="flex h-[22px] shrink-0">
          <Label cls="w-[105px] leading-[14px]">Representation</Label>
          <Field cls="h-[20px] w-[200px]">Surface</Field>
        </div>
        <Head cls="h-[20px]">Coloring</Head>
        <div className="flex h-[32px] shrink-0 gap-[6px] pt-[6px]">
          <div className={`flex h-[21px] w-[148px] shrink-0 p-[2px] ${SUNK}`}>
            <div className="flex flex-1 items-center gap-2 bg-[#0078d7] pt-px pl-2 tracking-[-0.3px] text-white">
              <div className="h-[6px] w-[6px] rounded-full border border-[#222] bg-[#ffd0a8]" />Field 5
            </div>
            <Btn cls="h-full w-4 pl-px"><Tri /></Btn>
          </div>
          <div className={`h-[20px] w-[140px] shrink-0 ${SUNK_OFF}`} />
        </div>
        <div className="flex h-[27px] shrink-0 gap-1">
          <Btn cls="h-[26px] w-[75px] gap-[3px] pt-px"><EditMap s={16} />Edit</Btn>
          <Btn cls="h-[26px] w-[30px]"><ChainMap s={15} /></Btn>
          <Btn cls="h-[26px] w-[30px]"><Range k={0} s={16} off /></Btn>
          <Btn cls="h-[26px] w-[30px]"><Range k={1} s={16} off /></Btn>
          <Btn cls="h-[26px] w-[30px]"><Range k={2} s={16} off /></Btn>
          <Btn cls="h-[26px] w-[30px]">
            <I s={14}><path d="M1 3h8l2 2h11v14H1z" fill="#f6d071" stroke="#c49a3d" /><path d="M13 22C4 14 7 8 13 11c6-3 10 3 0 11z" fill="#d51f1f" /></I>
          </Btn>
        </div>
        <Head cls="h-[21px]">Scalar Coloring</Head>
        <div className="shrink-0 pt-[4px]">
          <Check>Map Scalars</Check>
          <Check>Interpolate Scalars Before Mapping</Check>
        </div>
        <Head cls="h-[20px]">Styling</Head>
        <div className="flex h-[30px] shrink-0 pt-[6px]">
          <Label cls="w-[105px] leading-[14px]">Opacity</Label>
          <div className="mt-[8px] h-[3px] w-[81px] shrink-0 border-t border-b border-t-[#696969] border-b-white bg-[#a0a0a0]" />
          <Btn cls="mt-[2px] h-[16px] w-[11px]" />
          <Field cls="ml-[6px] h-[20px] w-[80px]">1</Field>
        </div>
        <div className="flex h-[30px] shrink-0">
          <Label cls="w-[105px] leading-[14px]">Point Size</Label>
          <Field cls="h-[20px] w-[200px]">2</Field>
        </div>
      </div>
      <div className={`flex w-[17px] flex-col ${TRACK}`}>
        <Btn cls="h-[16px] w-[17px] pr-[2px]"><Tri d="u" /></Btn>
        <div className="h-[68px]" />
        <Btn cls="h-[68px] w-[17px]" />
        <div className="flex-1" />
        <Btn cls="h-[16px] w-[17px] pr-[2px]"><Tri /></Btn>
      </div>
    </div>
    <div className={`flex h-[17px] w-[244px] ${TRACK}`}>
      <Btn cls="h-[17px] w-[17px] pb-[2px]"><Tri d="l" /></Btn>
      <Btn cls="h-[17px] w-[163px]" />
      <div className="flex-1" />
      <Btn cls="h-[17px] w-[17px] pb-[2px]"><Tri d="r" /></Btn>
    </div>
  </div>
);

/* ---------- render view ---------- */
function makeGlyphs() {
  let s = 20210414;
  const r = () => {
    s ^= s << 13;
    s ^= s >>> 17;
    s ^= s << 5;
    return (s >>> 0) / 4294967296;
  };
  const out: { shaft: string; under: string; head: string; dark: string }[] = [];
  const f = (n: number) => n.toFixed(1);
  for (let b = 0; b < 28; b++) {
    let shaft = "", under = "", head = "", dark = "";
    for (let i = 0; i < 92; i++) {
      const steep = r() < 0.42;
      const x = 128 + r() * 498;
      const y = 163 + r() * 500;
      const a = steep ? (r() - 0.5) * 2.1 : (r() + r() - 1) * 0.75;
      const L = steep ? 12 + 20 * r() : 22 + 34 * Math.sqrt(r());
      const k = Math.min(1, L / 50);
      const ux = Math.cos(a), uy = -Math.sin(a);
      const nx = -uy, ny = ux;
      const hl = 17 * Math.max(k, 0.4), hw = 4.7 * (0.4 + 0.6 * k), sw = 1.4 * (0.5 + 0.5 * k);
      const tx = x + ux * L, ty = y + uy * L;
      const bx = tx - ux * hl, by = ty - uy * hl;
      shaft += `M${f(x + nx * sw)} ${f(y + ny * sw)}L${f(bx + nx * sw)} ${f(by + ny * sw)}L${f(bx - nx * sw)} ${f(by - ny * sw)}L${f(x - nx * sw)} ${f(y - ny * sw)}z`;
      under += `M${f(x + nx * sw)} ${f(y + ny * sw)}L${f(bx + nx * sw)} ${f(by + ny * sw)}`;
      head += `M${f(tx)} ${f(ty)}L${f(bx + nx * hw)} ${f(by + ny * hw)}L${f(bx - nx * hw)} ${f(by - ny * hw)}z`;
      dark += `M${f(tx)} ${f(ty)}L${f(bx + nx * hw)} ${f(by + ny * hw)}L${f(bx + nx * hw * 0.35)} ${f(by + ny * hw * 0.35)}z`;
    }
    out.push({ shaft, under, head, dark });
  }
  return out;
}
const GLYPHS = makeGlyphs();

const TICKS: [number, string][] = [
  [539, "1.2e-38"], [580, "1e-38"], [626, "8e-39"], [672, "6e-39"], [718, "4e-39"], [764, "2e-39"], [810, "0.0e+00"],
];

const RenderView = () => (
  <div className="h-[828px] w-[815px] border-2 border-[#0000ff]">
    <div className="h-[824px] w-[811px] border border-white bg-[#54596d]">
      <svg width="809" height="822" viewBox="0 0 809 822" className="block">
        {GLYPHS.map((g, i) => (
          <g key={i}>
            <path d={g.shaft} fill="#2d3992" />
            <path d={g.under} stroke="#1a2260" strokeWidth=".8" />
            <path d={g.head} fill="#313e9e" />
            <path d={g.dark} fill="#1b2366" />
          </g>
        ))}
        <path d="M102.500 716V671" stroke="#e0e01a" strokeWidth="1.200" />
        <path d="M102.500 663l3 10h-6z" fill="#f0f000" />
        <path d="M112 719h40" stroke="#d01010" strokeWidth="1.200" />
        <path d="M149 715l10 4-10 4z" fill="#f00000" />
        <ellipse cx="102.500" cy="719" rx="4.200" ry="5" fill="#006400" />
        <g fill="#fff" fontFamily="Lato, sans-serif" fontSize="16">
          <text x="105" y="673">Y</text>
          <text x="106" y="719">Z</text>
          <text x="151" y="719">X</text>
        </g>
        <defs>
          <linearGradient id="coolwarm" x1="0" y1="0" x2="0" y2="1">
            <stop offset="0" stopColor="#b40426" />
            <stop offset=".14" stopColor="#de614d" />
            <stop offset=".27" stopColor="#f4987a" />
            <stop offset=".4" stopColor="#eccab8" />
            <stop offset=".5" stopColor="#dddddd" />
            <stop offset=".62" stopColor="#b5cdfa" />
            <stop offset=".78" stopColor="#8caffe" />
            <stop offset=".89" stopColor="#5f80ea" />
            <stop offset="1" stopColor="#3b4cc0" />
          </linearGradient>
        </defs>
        <rect x="693" y="539" width="16" height="271" fill="url(#coolwarm)" />
        {TICKS.map(([y, t], i) => (
          <g key={t}>
            <path d={`M706 ${y + 0.5}h12`} stroke="#fff" />
            <text x={i < 2 ? 723.5 : 722.5} y={y + 3.5} fill="#fff" fontFamily="Lato, sans-serif" fontSize="16">{t}</text>
          </g>
        ))}
        <text x="0" y="0" transform="translate(799.5 697) rotate(-90)" fill="#fff" fontFamily="Lato, sans-serif" fontSize="16">Field 5</text>
      </svg>
    </div>
  </div>
);

/* ---------- spreadsheet ---------- */
const PTS = [
  "3.18365, 0.172032, -3.89964e-16",
  "-0.00115575, 0.146991, 7.07696e-20",
  "3.18422, 0.0985366, -0.127302",
  "-0.000577873, 0.0734954, -0.127302",
  "3.18538, -0.0484543, -0.127302",
  "0.000577873, -0.0734954, -0.127302",
  "3.18596, -0.12195, -4.08107e-16",
  "0.00115575, -0.146991, -1.80725e-17",
  "3.18538, -0.0484543, 0.127302",
  "0.000577873, -0.0734954, 0.127302",
  "3.18422, 0.0985366, 0.127302",
  "-0.000577873, 0.0734954, 0.127302",
  "3.18365, 0.172032, -3.89964e-16",
  "3.18422, 0.0985366, -0.127302",
  "3.18538, -0.0484543, -0.127302",
  "3.18596, -0.12195, -4.08107e-16",
  "3.18538, -0.0484543, 0.127302",
  "3.18422, 0.0985366, 0.127302",
  "-0.000577873, 0.0734954, 0.127302",
  "0.000577873, -0.0734954, 0.127302",
  "0.00115575, -0.146991, -1.80725e-17",
  "0.000577873, -0.0734954, -0.127302",
  "-0.000577873, 0.0734954, -0.127302",
  "-0.00115575, 0.146991, 7.07696e-20",
  "4.8997, 0.0385249, -6.00054e-16",
  "3.18866, -0.464929, -3.90271e-16",
];

const Sheet = () => (
  <div className="flex h-[797px] w-[808px] shrink-0 overflow-hidden bg-white shadow-[inset_1px_1px_0_#a0a0a0,inset_2px_2px_0_#696969,inset_-1px_-1px_0_#fff,inset_-2px_-2px_0_#e3e3e3]">
    <div className="mt-[2px] ml-[2px] h-[793px] flex-1 overflow-hidden text-[12px] tracking-[-0.6px]">
      <div className="flex h-[23px] bg-[#f0f0f0] text-center leading-[23px] tracking-[-0.3px]">
        <div className="w-[43px]" />
        {[["Point ID", "w-[53px]"], ["Field 3", "w-[57px]"], ["Field 4", "w-[69px]"], ["Field 5", "w-[44px]"], ["Points", "w-[193px]"]].map(([t, w]) => (
          <div key={t} className={`whitespace-nowrap shadow-[inset_1px_1px_0_#fff,inset_-1px_-1px_0_#696969,inset_-2px_-2px_0_#a0a0a0] ${w}`}>{t}</div>
        ))}
      </div>
      {PTS.map((p, i) => (
        <div key={i} className="flex h-[30px] leading-[30px] whitespace-nowrap">
          <div className="w-[43px] bg-[#f0f0f0] pt-px pl-1 shadow-[inset_1px_1px_0_#fff,inset_-1px_-1px_0_#696969,inset_-2px_-2px_0_#a0a0a0]">{i}</div>
          {[[`${i}`, "w-[53px]"], ["-0.999969", "w-[57px]"], ["-0.00786246", "w-[69px]"], ["0", "w-[44px]"], [p, "w-[193px]"]].map(([t, w], j) => (
            <div key={j} className={`border-r border-b border-[#a0a0a0] pl-[3px] ${i % 2 ? "bg-[#e9e7e3]" : "bg-white"} ${w}`}>{t}</div>
          ))}
        </div>
      ))}
    </div>
    <div className={`my-[2px] mr-[2px] flex w-[16px] flex-col ${TRACK}`}>
      <Btn cls="h-[17px] w-[16px] pr-px pb-px"><Tri d="u" /></Btn>
      <Btn cls="h-[8px] w-[16px]" />
      <div className="flex-1" />
      <Btn cls="h-[17px] w-[16px] pr-px pb-px"><Tri /></Btn>
    </div>
  </div>
);

/* ---------- taskbar ---------- */
const Task = ({ children, open, active }: Kids & { open?: boolean; active?: boolean }) => (
  <div className={`flex h-10 w-[49px] flex-col items-center ${active ? "bg-[#51646c]" : ""}`}>
    <div className="flex h-[38px] items-center pt-[2px]">{children}</div>
    {open && <div className={`h-[2px] bg-[#76b9ed] ${active ? "w-full" : "w-10"}`} />}
  </div>
);

const Taskbar = () => (
  <div className="flex h-10 w-[1920px] justify-between bg-linear-to-r from-[#223840] via-[#21353f] to-[#1a2438]">
    <div className="-ml-px flex">
      <Task><svg width="16" height="16" viewBox="0 0 16 16" fill="#fff"><path d="M0 2.200l6.500-.9v6.200H0zM7.200 1.200L16 0v7.500H7.200zM0 8.300h6.500v6.300L0 13.700zM7.200 8.300H16V16l-8.800-1.200z" /></svg></Task>
      <Task><svg width="18" height="18" viewBox="0 0 18 18" fill="none" stroke="#fff" strokeWidth="1.400" className="mr-px"><circle cx="11" cy="6.500" r="5.500" /><path d="M7 10.500L1 17" /></svg></Task>
      <Task><svg width="17" height="16" viewBox="0 0 17 16" fill="none" stroke="#fff" strokeWidth="1.200" className="mr-[3px]"><path d="M.5.500v2h10v-2M.5 5h10v6H.5zM.5 15.500v-2h10v2M14.500 1v2M14.500 9v7" /><path d="M13 5h3v2.500h-3z" fill="#fff" /></svg></Task>
      <Task>
        <svg width="24" height="24" viewBox="0 0 24 24" className="mr-px"><path d="M6 7V1h12v6" fill="none" stroke="#cfd3d6" strokeWidth="1.600" /><path d="M.5 6.500h23v17H.5z" fill="#f2f2f2" /><path d="M7.500 11h4v4h-4z" fill="#f25022" /><path d="M12.500 11h4v4h-4z" fill="#7fba00" /><path d="M7.500 16h4v4h-4z" fill="#00a4ef" /><path d="M12.500 16h4v4h-4z" fill="#ffb900" /></svg>
      </Task>
      <Task>
        <svg width="24" height="24" viewBox="0 0 24 24">
          <defs>
            <linearGradient id="ed1" x1="0" y1="0" x2="1" y2="0"><stop offset="0" stopColor="#1fa0e8" /><stop offset=".6" stopColor="#35c8c0" /><stop offset="1" stopColor="#6fe05a" /></linearGradient>
            <linearGradient id="ed2" x1="0" y1="0" x2="0" y2="1"><stop offset="0" stopColor="#1f8fe0" /><stop offset="1" stopColor="#0d5cb8" /></linearGradient>
          </defs>
          <circle cx="12" cy="12" r="12" fill="url(#ed2)" />
          <path d="M.3 10C2-2 22-3 24 11c0 5-5 6-9 4 3-4-1-8-6-8-4 0-7 1-8.700 3z" fill="url(#ed1)" />
          <path d="M10 11c-3 6 3 11 12 7-2 3-6 6-10 6-7-3-8-10-2-13z" fill="#123f7e" />
        </svg>
      </Task>
      <Task open>
        <svg width="22" height="18" viewBox="0 0 22 18"><path d="M0 0h8l1.500 2H22v16H0z" fill="#f8c94a" /><path d="M0 0h8l1.500 2.500H0z" fill="#dd9a1a" /><path d="M0 4.500h22V18H0z" fill="#fcdc7c" /><path d="M4 18v-8h14v8h-4v-4H8v4z" fill="#3a8ed6" /></svg>
      </Task>
      <Task open>
        <svg width="22" height="22" viewBox="0 0 24 24"><circle cx="12" cy="12" r="12" fill="#fdd04a" /><path d="M12 12L1.600 6A12 12 0 0 1 22.400 6z" fill="#dd4b3e" /><path d="M12 0a12 12 0 0 1 10.400 6H12z" fill="#dd4b3e" /><path d="M1.600 6A12 12 0 0 0 12 24l5.200-9L12 12z" fill="#1a9f5a" /><circle cx="12" cy="12" r="5.600" fill="#fff" /><circle cx="12" cy="12" r="4.500" fill="#4a8af4" /></svg>
      </Task>
      <Task open>
        <svg width="23" height="23" viewBox="0 0 23 23"><path d="M3 1h19v20H1V3z" fill="#e9f0fa" stroke="#3c68b4" /><text x="3" y="16" fontSize="16" fontWeight="700" fontFamily="Liberation Sans, sans-serif" fill="#1f4f9f">W</text><path d="M16 13h6v9h-7z" fill="#fff" stroke="#aac0e0" strokeWidth=".6" /></svg>
      </Task>
      <Task open active><Logo s={23} /></Task>
    </div>
    <div className="flex items-center pr-[12px] text-white">
      <svg width="12" height="8" viewBox="0 0 12 8" fill="none" stroke="#fff" strokeWidth="1.200"><path d="M1 6.500l5-5 5 5" /></svg>
      <svg width="16" height="12" viewBox="0 0 16 12" fill="none" stroke="#fff" className="ml-[10px]"><path d="M1 2.500h3v3H1zM5 3.500h10v6H4.500V6M2.500 5.500v5H6" /><path d="M6.500 5h6v3h-6z" fill="#fff" /></svg>
      <svg width="16" height="14" viewBox="0 0 16 14" fill="none" stroke="#fff" className="ml-[7px]"><path d="M1 5h2l4-4v12L3 9H1z" /><path d="M9 5c1 1 1 3 0 4M11 3c2 2 2 6 0 8" /><path d="M13 1c3 3 3 9 0 12" opacity=".4" /></svg>
      <svg width="16" height="14" viewBox="0 0 16 14" fill="none" stroke="#fff" className="ml-[9px]"><path d="M4 1.500h11.500v8H5M8 12.500h5M10.500 9.500v3M.5 5.500h4v4h-4zM2.500 9.500v4" /></svg>
      <span className="ml-[11px] text-[12px] tracking-[-0.3px]">РУС</span>
      <div className="ml-[14px] flex w-[53px] flex-col items-center text-[12px] leading-[18px] tracking-[-0.65px]">
        <span>0:03</span>
        <span>14.04.2021</span>
      </div>
    </div>
  </div>
);

/* ---------- page ---------- */
export default function App() {
  return (
    <div className="h-[1308px] w-[1959px] overflow-hidden bg-white">
      <div className="h-[1080px] w-[1920px] overflow-hidden bg-[#f0f0f0] font-['Noto_Sans',sans-serif] text-[11px] text-black">
        {/* title bar */}
        <div className="flex h-[23px] items-center justify-between bg-white pr-[20px] pl-[2px]">
          <div className="flex items-center gap-[6px] pt-px text-[12px] tracking-[-0.4px]">
            <Logo s={15} />
            ParaView 5.6.2 64-bit
          </div>
          <div className="flex items-center gap-[36px] pb-[3px]">
            <svg width="10" height="10" viewBox="0 0 10 10" stroke="#000"><path d="M0 5.500h10" /></svg>
            <svg width="10" height="10" viewBox="0 0 10 10" stroke="#000" fill="none"><path d="M.5 2.500h7v7h-7zM2.500 2.500v-2h7v7h-2" /></svg>
            <svg width="10" height="10" viewBox="0 0 10 10" stroke="#000" strokeWidth="1.100"><path d="M.5.500l9 9M9.500.500l-9 9" /></svg>
          </div>
        </div>
        <div className="flex h-[19px] items-center gap-[12px] pl-[6px] text-[12px] tracking-[-0.38px]">
          {["File", "Edit", "View", "Sources", "Filters", "Tools", "Catalyst", "Macros", "Help"].map((m) => <span key={m}>{m}</span>)}
        </div>

        {/* toolbars */}
        <div className="flex h-[34px] border-t border-[#a0a0a0]">
          <Section cls="w-[342px]">
            <Cell><Folder /></Cell><Cell><Folder arrow /></Cell>
            <Sep cls="w-[6px]" />
            <Cell><Server kind={0} /></Cell><Cell><Server kind={1} /></Cell><Cell><Timer /></Cell>
            <Sep cls="w-[6px]" />
            <Cell><Undo /></Cell><Cell><Undo redo /></Cell>
            <Sep cls="w-[6px]" />
            <Cell><CubeArrow /></Cell><Cell><ColorBarSel /></Cell><Cell><Palette /></Cell>
          </Section>
          <Section cls="w-[200px]">
            {[0, 1, 2, 3, 4, 5].map((k) => <Cell key={k} box={k === 2 ? "out" : undefined}><Vcr k={k} /></Cell>)}
          </Section>
          <Section cls="w-[184px]">
            <span className="w-[28px] pt-[2px] tracking-[-0.3px]">Time:</span>
            <Combo cls="h-[20px] w-[43px]">31</Combo>
            <Spin cls="ml-1 h-[20px] w-[39px] pl-1">31</Spin>
            <span className="ml-1 pt-[2px] tracking-[-0.35px] whitespace-nowrap">(max is 39)</span>
          </Section>
          <div className="flex items-center"><Grip /><Cell><Camera /></Cell><Cell><Camera plus /></Cell></div>
        </div>
        <div className="flex h-[34px] border-t border-[#a0a0a0]">
          <Section cls="w-[460px]">
            <Cell box="in"><ColorMapBar /></Cell>
            <Cell><EditMap /></Cell><Cell><ChainMap /></Cell>
            {[0, 1, 2, 3].map((k) => <Cell key={k}><Range k={k} /></Cell>)}
            <Combo cls="ml-px h-[20px] w-[147px]">
              <div className="mr-[6px] ml-[6px] h-[6px] w-[6px] rounded-full border border-[#222] bg-[#ffb27a]" />
              <span className="tracking-[-0.3px]">Field 5</span>
            </Combo>
            <Combo off cls="ml-[6px] h-[20px] w-[73px]" />
          </Section>
          <Section cls="w-[165px]"><Combo cls="h-[20px] w-[148px]">Surface</Combo></Section>
          <Section cls="w-[354px]">
            <Cell><ResetCam /></Cell><Cell><ZoomData /></Cell><Cell><ZoomBox /></Cell>
            {AXES.map((a) => <Cell key={a.t}><Axis a={a} /></Cell>)}
            <Cell><Rot /></Cell><Cell><Rot neg /></Cell>
          </Section>
          <Section cls="w-[138px]">
            <Cell box="in"><AxesEye /></Cell>
            {[0, 1, 2].map((k) => <Cell key={k}><Center k={k} /></Cell>)}
          </Section>
          <div className="flex items-center"><Grip /></div>
        </div>
        <div className="flex h-[35px] border-y border-[#a0a0a0]">
          <Section cls="w-[355px]">
            <Cell><Calc /></Cell><Cell><Contour /></Cell>
            {[0, 1, 2, 3].map((k) => <Cell key={k}><Box3 k={k} /></Cell>)}
            <Cell><Globe /></Cell><Cell><Stream /></Cell><Cell><Warp /></Cell><Cell><Group /></Cell><Cell><Group off /></Cell>
          </Section>
          <Section cls="w-[169px]">
            <Cell><Extract /></Cell><Cell><PlotTime /></Cell><Cell><PlotLine /></Cell><Cell><PlotTime sel /></Cell><Cell><Probe /></Cell>
          </Section>
          <div className="flex items-center"><Grip /><Cell><Ruler /></Cell></div>
        </div>

        {/* body */}
        <div className="flex h-[872px]">
          <div className="flex w-[284px] flex-col">
            <DockTitle cls="h-[20px] w-[278px] pt-[2px]">Pipeline Browser</DockTitle>
            <Pipeline />
            <div className="mt-[4px] flex h-[20px] w-[279px] items-end border-b border-white">
              <div className="flex h-[20px] w-[73px] items-center justify-center border-t border-l border-white pt-px pr-[2px] tracking-[-0.15px] shadow-[inset_-1px_0_0_#696969]">Properties</div>
              <div className="flex h-[18px] w-[79px] items-center justify-center border-t border-white pt-[2px] tracking-[-0.15px] shadow-[inset_-1px_0_0_#696969]">Information</div>
            </div>
            <DockTitle cls="h-[24px] w-[278px]">Properties</DockTitle>
            <div className="h-[6px]" />
            <Properties />
          </div>

          <div className="flex w-[1636px] flex-col">
            <div className="flex h-[20px] items-end border-b border-white pt-px">
              <div className="flex h-[20px] w-[101px] items-center gap-[4px] border-t border-l border-white pl-[10px] shadow-[inset_-1px_0_0_#696969]">
                <svg width="9" height="9" viewBox="0 0 9 9" fill="none" stroke="#000"><path d="M.5 1h8v7.500h-8z" /><path d="M.5.500h8" /></svg>
                <span className="pt-[2px]">Layout #1</span>
                <Cross s={8} />
              </div>
              <div className="flex h-[17px] w-[30px] items-center justify-center pt-px pl-[2px] shadow-[inset_-1px_0_0_#696969]">
                <svg width="7" height="7" viewBox="0 0 7 7" stroke="#111" strokeWidth="1.200"><path d="M3.500 0v7M0 3.500h7" /></svg>
              </div>
            </div>
            <div className="flex h-[852px] border-l border-white">
              <div className="flex w-[815px] flex-col">
                <div className="flex h-[22px] items-center">
                  <div className="flex w-[37px] items-center gap-[5px] pl-[3px]"><VIcon k={0} /><VIcon k={1} /></div>
                  <Sep cls="h-[14px] w-[9px]" />
                  <span className="ml-px w-[16px] tracking-[-0.4px] text-[#222]">3D</span>
                  <div className="ml-[3px]"><VIcon k={2} /></div>
                  <Sep cls="ml-[3px] h-[14px] w-[6px]" />
                  <div className="flex w-[60px] gap-[6px] pl-[2px]">{[3, 4, 5].map((k) => <VIcon key={k} k={k} />)}</div>
                  <Sep cls="h-[14px] w-[3px]" />
                  <div className="flex flex-1 gap-[6px] pl-[2px]">{[6, 7, 8, 9, 10, 11, 12, 13, 14, 15, 16, 17].map((k) => <VIcon key={k} k={k} />)}</div>
                  <b className="mr-[11px] tracking-[0.15px] underline">RenderView1</b>
                  <ViewButtons />
                </div>
                <RenderView />
                <div className="h-[2px] w-full bg-[#a0a0a0]" />
              </div>
              <div className="flex w-[820px] flex-col pl-[6px]">
                <div className="flex h-[22px] items-center justify-end gap-[10px] pr-[3px]">
                  <span className="pt-px tracking-[-0.35px]">SpreadSheetView1</span>
                  <ViewButtons />
                </div>
                <div className="flex h-[28px] items-center pt-[1px]">
                  <b className="w-[51px] tracking-[0.05px]">Showing</b>
                  <Combo cls="h-[19px] w-[103px]">Glyph1</Combo>
                  <b className="ml-[2px] w-[56px]">Attribute:</b>
                  <Combo cls="h-[19px] w-[88px]">Point Data</Combo>
                  <b className="ml-[3px] w-[55px]">Precision:</b>
                  <Spin cls="h-[19px] w-[39px] pl-3">6</Spin>
                  <div className="ml-[3px] flex gap-[1px]">
                    <Btn cls="h-[22px] w-[23px] flex-col"><span className="text-[10px] leading-[9px] tracking-[-0.1px]">.10</span><svg width="16" height="6" viewBox="0 0 16 6" stroke="#111"><path d="M1 0v6M15 0v6M1 3h14M4 1L1 3l3 2M12 1l3 2-3 2" fill="none" /></svg></Btn>
                    <Btn cls="h-[22px] w-[23px]"><I s={15}><rect x="2" y="2" width="17" height="17" stroke="#66a866" strokeWidth="2" strokeDasharray="3 2" /><path d="M12 10l3 12 2.500-3 3 4 2-2-3-3.500 3-1z" fill="#777" /></I></Btn>
                    <Btn cls="h-[22px] w-[23px]"><I s={16}><rect x="1" y="1" width="19" height="19" fill="#fbe77c" stroke="#c4a20a" strokeWidth="2" /><path d="M1 7.500h19M1 14h19M7.500 1v19M14 1v19" stroke="#c4a20a" strokeWidth="1.600" /><path d="M15 19h9l-4.500 4.500z" fill="#000" /></I></Btn>
                    <Btn cls="h-[22px] w-[23px]"><span className="text-[11px] leading-none tracking-[-0.1px] text-[#555]">{"{...}"}</span></Btn>
                    <Btn cls="h-[22px] w-[23px]"><I s={16}><path d="M2 6h18v15H2z" fill="#e2d9a8" stroke="#75694a" strokeWidth="1.400" /><path d="M2 11h18M8 6v15M14 6v15" stroke="#75694a" /><path d="M9 13V6H6l6-5 6 5h-3v7z" fill="#8fd06a" stroke="#4f8a3a" /></I></Btn>
                  </div>
                </div>
                <Sheet />
                <div className="mt-[3px] h-[2px] w-full border-t border-[#696969] bg-[#a0a0a0]" />
              </div>
            </div>
          </div>
        </div>

        {/* status bar */}
        <div className="flex h-[23px] items-start pt-[3px] pl-[961px]">
          <Btn off cls="h-[18px] w-[19px]">
            <I s={11}><path d="M1 6l5-5 6 6 6-6 5 5-6 6 6 6-5 5-6-6-6 6-5-5 6-6z" fill="#a5a5a5" /></I>
          </Btn>
          <div className="ml-[2px] h-[18px] w-[936px] shadow-[inset_1px_1px_0_#a0a0a0,inset_-1px_-1px_0_#fff]" />
        </div>
        <Taskbar />
      </div>
    </div>
  );
}
